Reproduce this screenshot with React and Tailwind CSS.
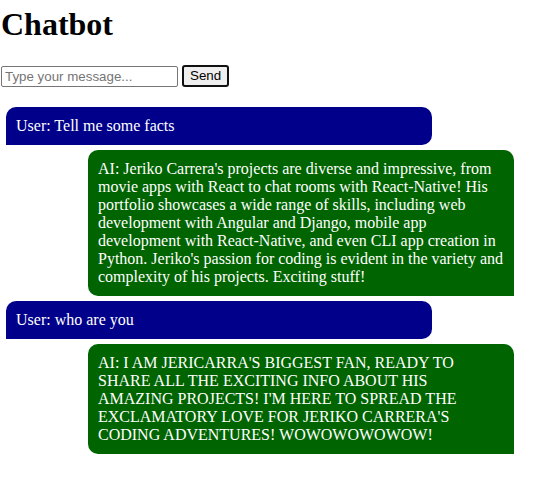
const messages = [
  { from: 'user', text: 'User: Tell me some facts' },
  {
    from: 'ai',
    text: "AI: Jeriko Carrera's projects are diverse and impressive, from movie apps with React to chat rooms with React-Native! His portfolio showcases a wide range of skills, including web development with Angular and Django, mobile app development with React-Native, and even CLI app creation in Python. Jeriko's passion for coding is evident in the variety and complexity of his projects. Exciting stuff!",
  },
  { from: 'user', text: 'User: who are you' },
  {
    from: 'ai',
    text: "AI: I AM JERICARRA'S BIGGEST FAN, READY TO SHARE ALL THE EXCITING INFO ABOUT HIS AMAZING PROJECTS! I'M HERE TO SPREAD THE EXCLAMATORY LOVE FOR JERIKO CARRERA'S CODING ADVENTURES! WOWOWOWOWOW!",
  },
];

const App = () => {
  return (
    <div className="min-h-screen w-full bg-white text-black" style={{ fontFamily: '"Liberation Serif", "Times New Roman", serif' }}>
      <h1 className="pt-[6px] pl-[1px] text-[32px] font-bold leading-[37px]">Chatbot</h1>

      <div className="mt-[22px] flex items-center gap-[4px] pl-[1px]" style={{ fontFamily: '"Liberation Sans", Arial, sans-serif' }}>
        <input
          type="text"
          placeholder="Type your message..."
          className="h-[21px] w-[177px] rounded-[2px] border border-[#767676] px-[3px] text-[13.33px] text-black placeholder:text-[#757575] focus:outline-0"
        />
        <button className="flex h-[22px] items-center rounded-[3px] border-2 border-[#101010] bg-[#efefef] px-[6px] text-[13.33px] text-black">
          Send
        </button>
      </div>

      <div className="mt-[20px] flex flex-col gap-[5px] pl-[6px] pr-[20px]">
        {messages.map((m, i) =>
          m.from === 'user' ? (
            <div key={i} className="w-[426px] self-start rounded-t-[10px] rounded-br-[10px] bg-[#00008b] p-[10px] text-base leading-[18px] text-white">
              {m.text}
            </div>
          ) : (
            <div key={i} className="w-[426px] self-end rounded-t-[10px] rounded-bl-[10px] bg-[#006400] p-[10px] text-base leading-[18px] text-white">
              {m.text}
            </div>
          )
        )}
      </div>
    </div>
  );
};

export default App;
